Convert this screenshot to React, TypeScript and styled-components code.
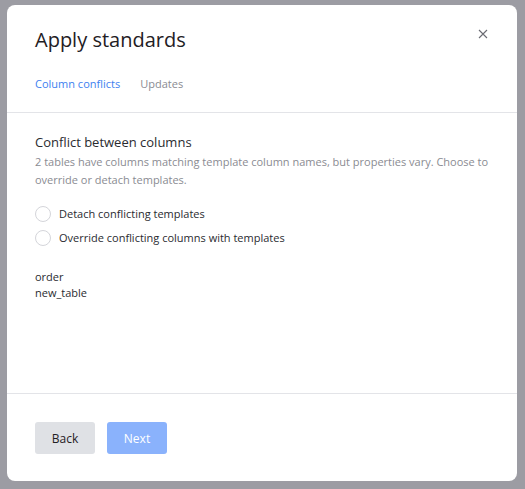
import styled, { createGlobalStyle } from 'styled-components';

const GlobalStyle = createGlobalStyle`
  html, body {
    margin: 0;
    padding: 0;
    height: 100%;
  }
  body {
    background: #9c9ca3;
    font-family: 'Open Sans', 'Liberation Sans', sans-serif;
    -webkit-font-smoothing: antialiased;
  }
`;

const Backdrop = styled.div`
  width: 525px;
  height: 489px;
  box-sizing: border-box;
  padding: 5px 8px 8px 7px;
  background: #9c9ca3;
`;

const Modal = styled.div`
  width: 510px;
  height: 476px;
  background: #fff;
  border-radius: 8px;
  display: flex;
  flex-direction: column;
  overflow: hidden;
`;

const Header = styled.div`
  position: relative;
  padding: 20px 28px 0;
  border-bottom: 1px solid #e3e4e8;
`;

const Title = styled.h2`
  margin: 0;
  font-size: 20px;
  font-weight: 400;
  color: #1f2024;
  line-height: 30px;
`;

const CloseButton = styled.button`
  position: absolute;
  top: 21px;
  right: 26px;
  width: 16px;
  height: 16px;
  padding: 0;
  border: none;
  background: none;
  display: flex;
  align-items: center;
  justify-content: center;
  cursor: pointer;
`;

const Tabs = styled.div`
  display: flex;
  gap: 20px;
  margin-top: 20px;
  padding-bottom: 19px;
`;

const Tab = styled.span<{ $active?: boolean }>`
  font-size: 11px;
  line-height: 18px;
  color: ${(p) => (p.$active ? '#3d7ff0' : '#8a8b92')};
`;

const Body = styled.div`
  flex: 1;
  padding: 19px 28px 0;
  border-bottom: 1px solid #e3e4e8;
`;

const SectionTitle = styled.h3`
  margin: 0;
  font-size: 13px;
  font-weight: 400;
  color: #2a2b30;
  line-height: 20px;
`;

const Description = styled.p`
  margin: 1px 0 0;
  font-size: 11px;
  line-height: 18px;
  color: #8a8b92;
`;

const Options = styled.div`
  display: flex;
  flex-direction: column;
  gap: 8px;
  margin-top: 17px;
`;

const Option = styled.label`
  display: flex;
  align-items: center;
  gap: 8px;
  font-size: 11px;
  line-height: 16px;
  color: #2a2b30;
`;

const Radio = styled.span`
  width: 14px;
  height: 14px;
  border: 1px solid #d4d5da;
  border-radius: 50%;
  background: #fff;
`;

const TableList = styled.div`
  margin-top: 23px;
  font-size: 11px;
  line-height: 16px;
  color: #2a2b30;
`;

const Footer = styled.div`
  height: 87px;
  box-sizing: border-box;
  padding: 28px 28px 0;
  display: flex;
  gap: 12px;
`;

const Button = styled.button<{ $primary?: boolean }>`
  height: 32px;
  width: 60px;
  padding: 0;
  border: none;
  border-radius: 3px;
  font-family: inherit;
  font-size: 12px;
  background: ${(p) => (p.$primary ? '#8ab2fc' : '#dfe1e5')};
  color: ${(p) => (p.$primary ? '#fff' : '#1f2024')};
`;

export default function App() {
  return (
    <>
      <GlobalStyle />
      <Backdrop>
        <Modal>
          <Header>
            <Title>Apply standards</Title>
            <CloseButton aria-label="Close">
              <svg width="10" height="10" viewBox="0 0 10 10">
                <path d="M1 1L9 9M9 1L1 9" stroke="#6b6c73" strokeWidth="1.1" />
              </svg>
            </CloseButton>
            <Tabs>
              <Tab $active>Column conflicts</Tab>
              <Tab>Updates</Tab>
            </Tabs>
          </Header>
          <Body>
            <SectionTitle>Conflict between columns</SectionTitle>
            <Description>
              2 tables have columns matching template column names, but properties vary. Choose to
              override or detach templates.
            </Description>
            <Options>
              <Option>
                <Radio />
                Detach conflicting templates
              </Option>
              <Option>
                <Radio />
                Override conflicting columns with templates
              </Option>
            </Options>
            <TableList>
              <div>order</div>
              <div>new_table</div>
            </TableList>
          </Body>
          <Footer>
            <Button>Back</Button>
            <Button $primary>Next</Button>
          </Footer>
        </Modal>
      </Backdrop>
    </>
  );
}
